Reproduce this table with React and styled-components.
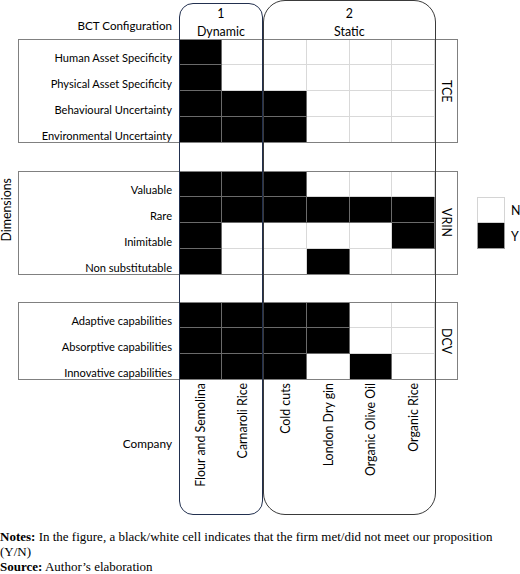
import styled, { createGlobalStyle } from "styled-components";

const GlobalStyle = createGlobalStyle`
  body {
    margin: 0;
    background: #fff;
  }
`;

const Page = styled.div`
  width: 520px;
  font-family: Lato, "Liberation Sans", sans-serif;
  font-size: 12.4px;
  color: #000;
`;

const Figure = styled.div`
  display: grid;
  grid-template-columns: 18px 161px repeat(6, 42.667px) 23px 19px 28px 1fr;
  grid-template-rows:
    39px repeat(4, 26px) 28px repeat(4, 26px) 27px
    repeat(3, 26px) 135px;
`;

const HeaderLabel = styled.div`
  grid-column: 2;
  grid-row: 1;
  display: flex;
  align-items: flex-end;
  justify-content: flex-end;
  padding: 0 7px 7px 0;
  font-size: 11.6px;
`;

const SideTitle = styled.div`
  grid-column: 1;
  grid-row: 2 / 15;
  display: flex;
  align-items: center;
  justify-content: flex-start;
`;

const Sideways = styled.span`
  writing-mode: vertical-rl;
  transform: rotate(180deg);
  line-height: 13px;
  white-space: nowrap;
`;

const Frame = styled.div`
  grid-column: 2 / 10;
  grid-row: ${(p) => p.$start} / span ${(p) => p.$span};
  border: 1px solid #808080;
  z-index: 1;
  pointer-events: none;
`;

const RowLabel = styled.div`
  grid-column: 2;
  grid-row: ${(p) => p.$row};
  display: flex;
  align-items: flex-end;
  justify-content: flex-end;
  padding: 0 7px 0 0;
  font-size: 11.1px;
  line-height: 15px;
  white-space: nowrap;
`;

const Cell = styled.div`
  grid-column: ${(p) => p.$col};
  grid-row: ${(p) => p.$row};
  background: ${(p) => (p.$on ? "#000" : "#fff")};
  box-shadow: inset -1px -1px 0 ${(p) => (p.$on ? "#6a6a6a" : "#d9d9d9")};
`;

const Tag = styled.div`
  grid-column: 9;
  grid-row: ${(p) => p.$start} / span ${(p) => p.$span};
  display: flex;
  align-items: center;
  justify-content: center;
`;

const Downward = styled.span`
  writing-mode: vertical-rl;
  line-height: 14px;
`;

const Group = styled.div`
  grid-column: ${(p) => p.$cols};
  grid-row: 1 / 16;
  border: 1.5px solid ${(p) => p.$color};
  border-radius: ${(p) => p.$radius}px;
  margin: ${(p) => p.$margin};
  padding-top: ${(p) => p.$pad}px;
  text-align: center;
  line-height: 18px;
  z-index: 2;
  pointer-events: none;
`;

const CompanyLabel = styled.div`
  grid-column: 2;
  grid-row: 15;
  display: flex;
  align-items: center;
  justify-content: flex-end;
  padding: 0 7px 8px 0;
  font-size: 11.8px;
`;

const CompanyName = styled.div`
  grid-column: ${(p) => p.$col};
  grid-row: 15;
  display: flex;
  align-items: flex-start;
  justify-content: center;
  padding-top: 3px;
`;

const Swatch = styled.div`
  grid-column: 11;
  grid-row: ${(p) => p.$row};
  background: ${(p) => (p.$on ? "#000" : "#fff")};
  border: 1px solid ${(p) => (p.$on ? "#9a9a9a" : "#d4d4d4")};
  border-top-width: ${(p) => (p.$on ? 0 : 1)}px;
`;

const SwatchLabel = styled.div`
  grid-column: 12;
  grid-row: ${(p) => p.$row};
  display: flex;
  align-items: center;
  padding-left: 6px;
`;

const Notes = styled.div`
  margin-top: 14px;
  font-family: "Liberation Serif", "Times New Roman", serif;
  font-size: 13px;
  line-height: 15px;
`;

const NoteLine = styled.div`
  white-space: nowrap;

  b {
    font-weight: bold;
  }
`;

const sections = [
  {
    tag: "TCE",
    start: 2,
    rows: [
      ["Human Asset Specificity", "YNNNNN"],
      ["Physical Asset Specificity", "YNNNNN"],
      ["Behavioural Uncertainty", "YYYNNN"],
      ["Environmental Uncertainty", "YYYNNN"],
    ],
  },
  {
    tag: "VRIN",
    start: 7,
    rows: [
      ["Valuable", "YYYNNN"],
      ["Rare", "YYYYYY"],
      ["Inimitable", "YNNNNY"],
      ["Non substitutable", "YNNYNN"],
    ],
  },
  {
    tag: "DCV",
    start: 12,
    rows: [
      ["Adaptive capabilities", "YYYYNN"],
      ["Absorptive capabilities", "YYYYNN"],
      ["Innovative capabilities", "YYYNYN"],
    ],
  },
];

const companies = [
  "Flour and Semolina",
  "Carnaroli Rice",
  "Cold cuts",
  "London Dry gin",
  "Organic Olive Oil",
  "Organic Rice",
];

export default function App() {
  return (
    <Page>
      <GlobalStyle />
      <Figure>
        <HeaderLabel>BCT Configuration</HeaderLabel>
        <SideTitle>
          <Sideways>Dimensions</Sideways>
        </SideTitle>

        {sections.map((section) => (
          <Frame
            key={`frame-${section.tag}`}
            $start={section.start}
            $span={section.rows.length}
          />
        ))}

        {sections.map((section) =>
          section.rows.map(([label, marks], r) => {
            const row = section.start + r;
            return [
              <RowLabel key={label} $row={row}>
                {label}
              </RowLabel>,
              ...marks.split("").map((m, c) => (
                <Cell
                  key={`${label}-${c}`}
                  $row={row}
                  $col={c + 3}
                  $on={m === "Y"}
                />
              )),
            ];
          })
        )}

        {sections.map((section) => (
          <Tag
            key={`tag-${section.tag}`}
            $start={section.start}
            $span={section.rows.length}
          >
            <Downward>{section.tag}</Downward>
          </Tag>
        ))}

        <Group
          $cols="3 / 5"
          $color="#22304f"
          $radius={14}
          $margin="3px 1.5px 0 0"
          $pad={1}
        >
          1
          <br />
          Dynamic
        </Group>
        <Group
          $cols="5 / 9"
          $color="#3a3a3a"
          $radius={22}
          $margin="0 -1px 0 -1.5px"
          $pad={4}
        >
          2
          <br />
          Static
        </Group>

        <CompanyLabel>Company</CompanyLabel>
        {companies.map((name, i) => (
          <CompanyName key={name} $col={i + 3}>
            <Sideways>{name}</Sideways>
          </CompanyName>
        ))}

        <Swatch $row={8} />
        <SwatchLabel $row={8}>N</SwatchLabel>
        <Swatch $row={9} $on />
        <SwatchLabel $row={9}>Y</SwatchLabel>
      </Figure>

      <Notes>
        <NoteLine>
          <b>Notes:</b> In the figure, a black/white cell indicates that the
          firm met/did not meet our proposition
        </NoteLine>
        <NoteLine>(Y/N)</NoteLine>
        <NoteLine>
          <b>Source:</b> Author’s elaboration
        </NoteLine>
      </Notes>
    </Page>
  );
}
